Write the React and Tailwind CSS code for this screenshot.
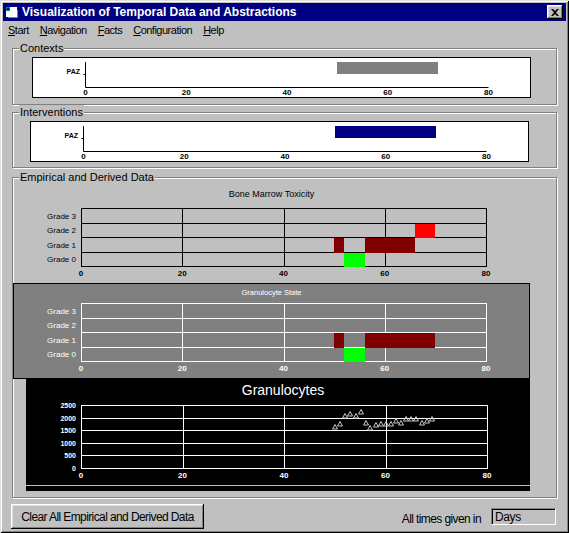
import React from "react";

const FONT = "Liberation Sans, Arial, sans-serif";

function TitleIcon() {
  return (
    <svg width="14" height="14" viewBox="0 0 14 14" className="block">
      <rect x="1" y="2" width="11" height="10" fill="#ffffff" />
      <rect x="1" y="2" width="4" height="4" fill="#008080" />
      <rect x="2" y="3" width="2" height="2" fill="#000080" />
      <path d="M12 5h1v8H3v-1h9z" fill="#808080" />
    </svg>
  );
}

function CloseButton() {
  return (
    <div className="w-[16px] h-[14px] bg-[#c0c0c0] flex items-center justify-center shadow-[inset_-1px_-1px_0_#000,inset_1px_1px_0_#fff,inset_-2px_-2px_0_#808080,inset_2px_2px_0_#dfdfdf]">
      <svg width="8" height="7" viewBox="0 0 8 7" className="block">
        <path d="M0 0h2l2 2 2-2h2L5 3.5 8 7H6L4 5 2 7H0l3-3.5z" fill="#000" />
      </svg>
    </div>
  );
}

function GroupBox({ label, className, children }) {
  return (
    <div
      className={`relative border border-[#808080] shadow-[inset_1px_1px_0_#fff,1px_1px_0_#fff] ${className}`}
    >
      <span className="absolute left-[6px] -top-[8px] bg-[#c0c0c0] px-[1px] text-[11px] leading-[14px] text-black">
        {label}
      </span>
      {children}
    </div>
  );
}

function PazTimeline({ color }) {
  const ax = 52.5;
  const right = 455.5;
  const step = (right - ax) / 4;
  return (
    <div className="w-[499px] h-[41px] border border-black bg-white">
      <svg width="497" height="39" className="block" fontFamily={FONT}>
        <text x="47" y="16" textAnchor="end" fontSize="7" fontWeight="bold">
          PAZ
        </text>
        <line x1={ax} y1="4" x2={ax} y2="29.5" stroke="#000" />
        <line x1={ax - 2} y1="16.5" x2={ax} y2="16.5" stroke="#000" />
        <line x1={ax} y1="29.5" x2={right} y2="29.5" stroke="#000" />
        {[0, 20, 40, 60, 80].map((v, i) => (
          <text
            key={v}
            x={ax + step * i}
            y="37"
            textAnchor="middle"
            fontSize="8"
            fontWeight="bold"
          >
            {v}
          </text>
        ))}
        <rect x="304" y="4" width="101" height="12" fill={color} />
      </svg>
    </div>
  );
}

function GradeChart({ width, height, left, top, title, titleY, titleSize, fg, bars }) {
  const w = 405;
  const h = 58;
  const sx = (v) => left + (v * w) / 80;
  const rows = [0, 1, 2, 3, 4].map((i) => Math.round(top + (h * i) / 4));
  return (
    <svg width={width} height={height} className="block" fontFamily={FONT}>
      <text x={width / 2} y={titleY} textAnchor="middle" fontSize={titleSize} fill={fg}>
        {title}
      </text>
      {[0, 1, 2, 3].map((i) => (
        <text
          key={i}
          x={left - 5}
          y={(rows[i] + rows[i + 1]) / 2 + 3}
          textAnchor="end"
          fontSize="8"
          fill={fg}
        >
          Grade {3 - i}
        </text>
      ))}
      {rows.map((y, i) => (
        <line key={"h" + i} x1={left} y1={y + 0.5} x2={left + w} y2={y + 0.5} stroke={fg} />
      ))}
      {[0, 20, 40, 60, 80].map((v) => (
        <line
          key={"v" + v}
          x1={Math.round(sx(v)) + 0.5}
          y1={top}
          x2={Math.round(sx(v)) + 0.5}
          y2={top + h + 1}
          stroke={fg}
        />
      ))}
      {bars.map((b, i) => {
        const r = 3 - b.grade;
        return (
          <rect
            key={i}
            x={Math.round(sx(b.from))}
            y={rows[r] + 1}
            width={Math.round(sx(b.to)) - Math.round(sx(b.from))}
            height={rows[r + 1] - rows[r]}
            fill={b.color}
          />
        );
      })}
      {[0, 20, 40, 60, 80].map((v) => (
        <text
          key={"t" + v}
          x={sx(v)}
          y={top + h + 10}
          textAnchor="middle"
          fontSize="8"
          fontWeight="bold"
          fill={fg}
        >
          {v}
        </text>
      ))}
    </svg>
  );
}

const POINTS = [
  [335, 427], [340, 424], [345, 416], [350, 414], [356, 416], [361, 412],
  [366, 423], [370, 428], [376, 425], [381, 424], [386, 424], [391, 424],
  [396, 421], [401, 423], [406, 419], [411, 419], [416, 419], [422, 423],
  [427, 421], [432, 419],
];

function GranulocyteChart() {
  const left = 55;
  const top = 26;
  const w = 406;
  const h = 63;
  const sx = (v) => left + (v * w) / 80;
  const rows = [0, 1, 2, 3, 4, 5].map((i) => Math.round(top + (h * i) / 5));
  const labels = ["2500", "2000", "1500", "1000", "500", "0"];
  return (
    <svg width="504" height="112" className="block" fontFamily={FONT}>
      <text x="257" y="16" textAnchor="middle" fontSize="14" fill="#fff">
        Granulocytes
      </text>
      {rows.map((y, i) => (
        <line key={"h" + i} x1={left} y1={y + 0.5} x2={left + w} y2={y + 0.5} stroke="#fff" />
      ))}
      {rows.map((y, i) => (
        <text
          key={"l" + i}
          x={left - 5}
          y={y + 3}
          textAnchor="end"
          fontSize="7"
          fontWeight="bold"
          fill="#fff"
        >
          {labels[i]}
        </text>
      ))}
      {[0, 20, 40, 60, 80].map((v) => (
        <line
          key={"v" + v}
          x1={Math.round(sx(v)) + 0.5}
          y1={top}
          x2={Math.round(sx(v)) + 0.5}
          y2={top + h + 1}
          stroke="#fff"
        />
      ))}
      {[0, 20, 40, 60, 80].map((v) => (
        <text
          key={"t" + v}
          x={sx(v)}
          y={top + h + 10}
          textAnchor="middle"
          fontSize="8"
          fontWeight="bold"
          fill="#fff"
        >
          {v}
        </text>
      ))}
      {POINTS.map(([gx, gy], i) => {
        const x = gx - 26;
        const y = gy - 379;
        return (
          <path
            key={i}
            d={`M${x} ${y - 2.5}L${x + 2.5} ${y + 2}H${x - 2.5}Z`}
            fill="none"
            stroke="#c8c8c8"
            strokeWidth="1"
          />
        );
      })}
      <line x1="0" y1="106.5" x2="504" y2="106.5" stroke="#c0c0c0" />
    </svg>
  );
}

const MARROW_BARS = [
  { grade: 1, from: 50, to: 52, color: "#800000" },
  { grade: 0, from: 52, to: 56, color: "#00ff00" },
  { grade: 1, from: 56, to: 66, color: "#800000" },
  { grade: 2, from: 66, to: 70, color: "#ff0000" },
];

const STATE_BARS = [
  { grade: 1, from: 50, to: 52, color: "#800000" },
  { grade: 0, from: 52, to: 56, color: "#00ff00" },
  { grade: 1, from: 56, to: 70, color: "#800000" },
];

export default function App() {
  const menu = ["Start", "Navigation", "Facts", "Configuration", "Help"];
  return (
    <div className="w-[569px] h-[533px] bg-[#c0c0c0] p-[3px] flex flex-col font-['Liberation_Sans',Arial,sans-serif] text-black shadow-[inset_1px_1px_0_#dfdfdf,inset_-1px_-1px_0_#000,inset_2px_2px_0_#fff,inset_-2px_-2px_0_#808080]">
      {/* title bar */}
      <div className="h-[18px] bg-[#000080] flex items-center pl-[2px] pr-[3px]">
        <TitleIcon />
        <span className="ml-[3px] text-[12px] font-bold text-white leading-none">
          Visualization of Temporal Data and Abstractions
        </span>
        <div className="ml-auto">
          <CloseButton />
        </div>
      </div>

      {/* menu */}
      <div className="h-[19px] flex items-center gap-[11px] pl-[5px] text-[11px] tracking-[-0.5px]">
        {menu.map((m) => (
          <span key={m}>
            <span className="underline underline-offset-1">{m[0]}</span>
            {m.slice(1)}
          </span>
        ))}
      </div>

      <GroupBox label="Contexts" className="mt-[8px] ml-[9px] w-[545px] h-[57px] pt-[8px] pl-[19px]">
        <PazTimeline color="#808080" />
      </GroupBox>

      <GroupBox label="Interventions" className="mt-[7px] ml-[9px] w-[545px] h-[56px] pt-[8px] pl-[17px]">
        <PazTimeline color="#000080" />
      </GroupBox>

      <GroupBox label="Empirical and Derived Data" className="mt-[9px] ml-[9px] w-[545px] h-[321px] pt-[10px]">
        <GradeChart
          width={517}
          height={95}
          left={68}
          top={20}
          title="Bone Marrow Toxicity"
          titleY={9}
          titleSize={9}
          fg="#000"
          bars={MARROW_BARS}
        />
        <div className="w-[517px] h-[96px] border border-black bg-[#808080]">
          <GradeChart
            width={515}
            height={94}
            left={67}
            top={19}
            title="Granulocyte State"
            titleY={11}
            titleSize={7.5}
            fg="#fff"
            bars={STATE_BARS}
          />
        </div>
        <div className="ml-[13px] w-[504px] h-[112px] bg-black">
          <GranulocyteChart />
        </div>
      </GroupBox>

      {/* footer */}
      <div className="mt-[6px] h-[25px] flex items-center">
        <button className="ml-[8px] w-[193px] h-[25px] bg-[#c0c0c0] text-[12px] tracking-[-0.6px] shadow-[inset_-1px_-1px_0_#000,inset_1px_1px_0_#fff,inset_-2px_-2px_0_#808080,inset_2px_2px_0_#dfdfdf]">
          Clear All Empirical and Derived Data
        </button>
        <span className="ml-auto mt-[4px] text-[12px] tracking-[-0.6px]">All times given in</span>
        <div className="ml-[10px] mr-[10px] w-[65px] h-[17px] border-t border-l border-[#808080] border-r-white border-b-white border-r border-b flex items-center pl-[3px] text-[12px] tracking-[-0.4px] shadow-[inset_1px_1px_0_#000]">
          Days
        </div>
      </div>
    </div>
  );
}
